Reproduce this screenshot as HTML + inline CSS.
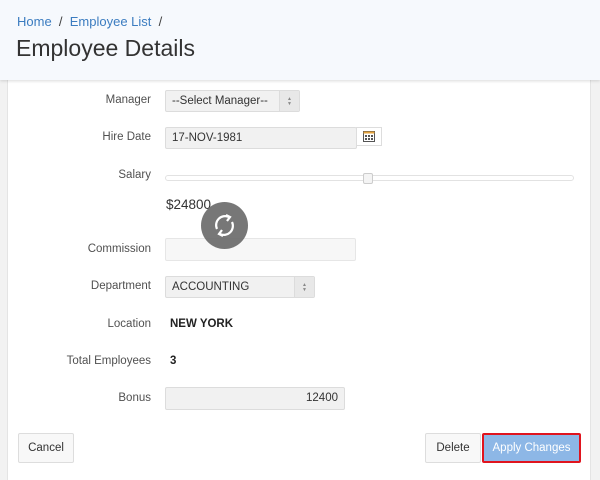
<!DOCTYPE html>
<html><head><style>
body{margin:0;width:600px;height:470px;overflow:hidden;background:#f2f2f2;font-family:"Liberation Sans",sans-serif;font-size:12px;color:#404040;position:relative}
.hdr{position:absolute;left:0;top:0;width:600px;height:80px;background:#f6f9fd;box-shadow:0 1px 3px rgba(0,0,0,.15);z-index:2}
.bc{position:absolute;left:17px;top:14px;font-size:13px;color:#404040}
.bc a{color:#3b7cc0;text-decoration:none}
.h1{position:absolute;left:16px;top:35px;font-size:23px;color:#333}
.panel{position:absolute;left:7px;top:80px;width:582px;height:400px;background:#fff;border-left:1px solid #e4e4e4;border-right:1px solid #e4e4e4}
.lbl{position:absolute;right:449px;font-size:11.5px;color:#505050;text-align:right;white-space:nowrap}
.inp{position:absolute;background:#f1f1f1;border:1px solid #dcdcdc;border-radius:2px;box-sizing:border-box;font-size:11.5px;color:#333;padding:0 6px;line-height:20px}
.sel .arr{position:absolute;right:0;top:0;width:20px;height:100%;background:#e8e8e8;border-left:1px solid #dcdcdc;font-size:5px;color:#888;text-align:center;line-height:5px;padding-top:6px;box-sizing:border-box}
.val{position:absolute;left:170px;font-weight:bold;color:#222;font-size:11.5px}
.btn{position:absolute;top:433px;height:30px;box-sizing:border-box;border:1px solid #ddd;background:#f8f8f8;border-radius:2px;font-size:11.5px;color:#333;text-align:center;line-height:28px}
</style></head><body>
<div class="hdr"><div class="bc"><a>Home</a> &nbsp;/&nbsp; <a>Employee List</a> &nbsp;/</div><div class="h1">Employee Details</div></div>
<div class="panel"></div>
<div class="lbl" style="top:94px">Manager</div>
<div class="inp sel" style="left:165px;top:90px;width:135px;height:22px">--Select Manager--<div class="arr">&#9650;<br>&#9660;</div></div>
<div class="lbl" style="top:131px">Hire Date</div>
<div class="inp" style="left:165px;top:127px;width:192px;height:22px">17-NOV-1981</div>
<div style="position:absolute;left:356px;top:127px;width:26px;height:19px;border:1px solid #ddd;box-sizing:border-box;background:#fff">
<svg width="24" height="17" viewBox="0 0 24 17"><rect x="6.5" y="3.5" width="11" height="10" fill="#fff" stroke="#555"/><rect x="6.5" y="3.5" width="11" height="2" fill="#e5a33c"/><rect x="8" y="7" width="2" height="2" fill="#555"/><rect x="11" y="7" width="2" height="2" fill="#555"/><rect x="14" y="7" width="2" height="2" fill="#555"/><rect x="8" y="10" width="2" height="2" fill="#555"/><rect x="11" y="10" width="2" height="2" fill="#555"/><rect x="14" y="10" width="2" height="2" fill="#555"/></svg></div>
<div class="lbl" style="top:169px">Salary</div>
<div style="position:absolute;left:165px;top:175px;width:409px;height:6px;border:1px solid #e2e2e2;border-radius:3px;box-sizing:border-box"></div>
<div style="position:absolute;left:363px;top:173px;width:10px;height:11px;border:1px solid #ccc;background:#f4f4f4;border-radius:2px;box-sizing:border-box"></div>
<div style="position:absolute;left:166px;top:197px;font-size:13.5px;color:#333">$24800</div>
<div class="lbl" style="top:243px">Commission</div>
<div class="inp" style="left:165px;top:238px;width:191px;height:23px;background:#f7f7f7;border-color:#e6e6e6"></div>
<div style="position:absolute;left:201px;top:202px;width:47px;height:47px;border-radius:50%;background:#707070;opacity:.95">
<svg width="47" height="47" viewBox="0 0 47 47" fill="none" stroke="#fff" stroke-width="2.2"><path d="M16 27 A9 9 0 0 1 28 15"/><path d="M25 13 L29 15 L26 19" /><path d="M31 20 A9 9 0 0 1 19 32"/><path d="M22 34 L18 32 L21 28"/></svg></div>
<div class="lbl" style="top:280px">Department</div>
<div class="inp sel" style="left:165px;top:276px;width:150px;height:22px">ACCOUNTING<div class="arr">&#9650;<br>&#9660;</div></div>
<div class="lbl" style="top:318px">Location</div><div class="val" style="top:318px">NEW YORK</div>
<div class="lbl" style="top:355px">Total Employees</div><div class="val" style="top:355px">3</div>
<div class="lbl" style="top:392px">Bonus</div>
<div class="inp" style="left:165px;top:387px;width:180px;height:23px;text-align:right;line-height:21px">12400</div>
<div class="btn" style="left:18px;width:56px">Cancel</div>
<div class="btn" style="left:425px;width:56px">Delete</div>
<div class="btn" style="left:482px;width:99px;border:2px solid #e0141e;background:#8db7e6;color:#fff;line-height:26px">Apply Changes</div>
</body></html>
